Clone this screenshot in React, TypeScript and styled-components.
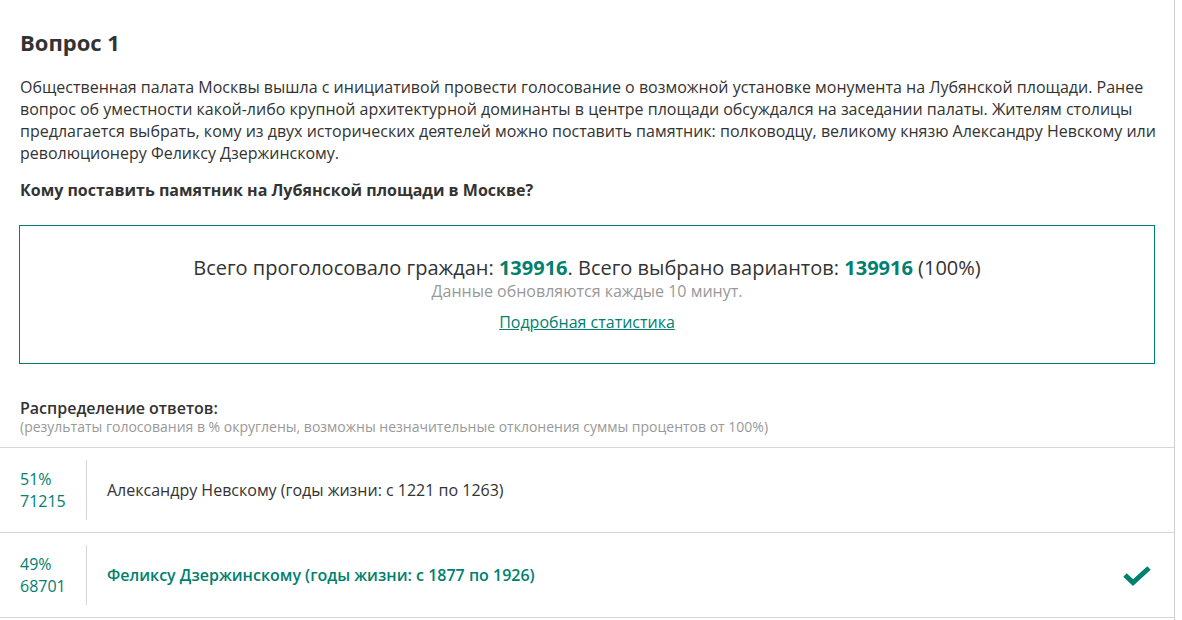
import React from 'react'
import styled, { createGlobalStyle } from 'styled-components'

const teal = '#00806f'

const GlobalStyle = createGlobalStyle`
  html, body {
    margin: 0;
    padding: 0;
    background: #fff;
  }
  body {
    font-family: 'Open Sans', 'Noto Sans', sans-serif;
    color: #333;
  }
`

const Panel = styled.div`
  width: 1174px;
  min-height: 620px;
  border-right: 1px solid #cfcfcf;
  box-sizing: content-box;
`

const Header = styled.div`
  padding: 27px 12px 0 20px;
`

const Title = styled.h2`
  margin: 0;
  font-size: 22px;
  line-height: 30px;
  font-weight: 700;
  color: #333;
`

const Lead = styled.p`
  margin: 19px 0 0;
  font-size: 16px;
  line-height: 22px;
  color: #333;
`

const Question = styled.p`
  margin: 15px 0 0;
  font-size: 16px;
  line-height: 22px;
  font-weight: 700;
`

const Summary = styled.div`
  margin: 24px 0 0 -1px;
  width: 1134px;
  border: 1px solid ${teal};
  padding: 29px 0 30px;
  text-align: center;
`

const Totals = styled.div`
  font-size: 20px;
  line-height: 26px;
`

const Num = styled.b`
  color: ${teal};
  font-weight: 700;
`

const Note = styled.div`
  font-size: 16px;
  line-height: 20px;
  color: #999;
`

const StatsLink = styled.a`
  display: inline-block;
  margin-top: 10px;
  font-size: 16px;
  line-height: 22px;
  color: ${teal};
  text-decoration: underline;
`

const Distribution = styled.div`
  padding: 34px 20px 12px;
`

const DistTitle = styled.div`
  font-size: 16px;
  line-height: 20px;
  font-weight: 600;
`

const DistNote = styled.div`
  font-size: 14px;
  line-height: 17px;
  color: #999;
`

const List = styled.div`
  border-top: 1px solid #d6d6d6;
`

const Row = styled.div`
  display: flex;
  align-items: center;
  height: 84px;
  border-bottom: 1px solid #d6d6d6;
  padding: 0 22px 0 20px;
`

const Count = styled.div`
  width: 66px;
  align-self: stretch;
  margin: 12px 0;
  border-right: 1px solid #d6d6d6;
  display: flex;
  flex-direction: column;
  justify-content: center;
  font-size: 16px;
  line-height: 22px;
  color: ${teal};
`

const Answer = styled.div<{ $chosen?: boolean }>`
  flex: 1;
  padding-left: 20px;
  font-size: 16px;
  line-height: 22px;
  color: ${(p) => (p.$chosen ? teal : '#333')};
  font-weight: ${(p) => (p.$chosen ? 600 : 400)};
`

const Check = () => (
  <svg width="30" height="22" viewBox="0 0 30 22">
    <path d="M3 11 L11 18.5 L27 4" fill="none" stroke={teal} strokeWidth="5" />
  </svg>
)

const answers = [
  { pct: 51, votes: 71215, text: 'Александру Невскому (годы жизни: с 1221 по 1263)', chosen: false },
  { pct: 49, votes: 68701, text: 'Феликсу Дзержинскому (годы жизни: с 1877 по 1926)', chosen: true },
]

export default function App() {
  return (
    <>
      <GlobalStyle />
      <Panel>
        <Header>
          <Title>Вопрос 1</Title>
          <Lead>
            Общественная палата Москвы вышла с инициативой провести голосование о возможной установке
            монумента на Лубянской площади. Ранее вопрос об уместности какой-либо крупной архитектурной
            доминанты в центре площади обсуждался на заседании палаты. Жителям столицы предлагается
            выбрать, кому из двух исторических деятелей можно поставить памятник: полководцу, великому
            князю Александру Невскому или революционеру Феликсу Дзержинскому.
          </Lead>
          <Question>Кому поставить памятник на Лубянской площади в Москве?</Question>
          <Summary>
            <Totals>
              Всего проголосовало граждан: <Num>139916</Num>. Всего выбрано вариантов:{' '}
              <Num>139916</Num> (100%)
            </Totals>
            <Note>Данные обновляются каждые 10 минут.</Note>
            <StatsLink href="#">Подробная статистика</StatsLink>
          </Summary>
        </Header>
        <Distribution>
          <DistTitle>Распределение ответов:</DistTitle>
          <DistNote>
            (результаты голосования в % округлены, возможны незначительные отклонения суммы процентов от
            100%)
          </DistNote>
        </Distribution>
        <List>
          {answers.map((a) => (
            <Row key={a.votes}>
              <Count>
                <span>{a.pct}%</span>
                <span>{a.votes}</span>
              </Count>
              <Answer $chosen={a.chosen}>{a.text}</Answer>
              {a.chosen && <Check />}
            </Row>
          ))}
        </List>
      </Panel>
    </>
  )
}
